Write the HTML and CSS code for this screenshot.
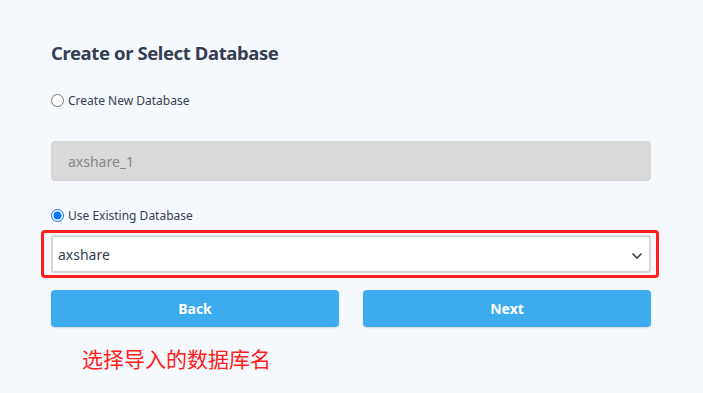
FILE: index.html
```html
<!DOCTYPE html>
<html lang="en">
<head>
  <meta charset="UTF-8" />
  <title>Create or Select Database</title>
  <meta name="viewport" content="width=device-width, initial-scale=1" />
  <link rel="stylesheet" href="styles.css">
</head>
<body>
  <div class="panel">
    <h1>Create or Select Database</h1>

    <label class="choice choice-first">
      <input type="radio" name="dbmode" value="new" />
      <span>Create New Database</span>
    </label>

    <input class="text-field" type="text" value="axshare_1" disabled />

    <label class="choice">
      <input type="radio" name="dbmode" value="existing" checked />
      <span>Use Existing Database</span>
    </label>

    <div class="highlight">
      <div class="select-box">
        <span>axshare</span>
        <svg class="chevron" width="12" height="8" viewBox="0 0 12 8">
          <path d="M1.5 1.5 L6 6 L10.5 1.5" fill="none" stroke="#3a4456" stroke-width="1.6" />
        </svg>
      </div>
    </div>

    <div class="actions">
      <button class="btn">Back</button>
      <button class="btn">Next</button>
    </div>

    <p class="note">选择导入的数据库名</p>
  </div>
</body>
</html>
```

FILE: styles.css
```css
body {
  font-family: 'Source Sans Pro', 'Noto Sans', sans-serif;
  background: #f5f8fc;
  margin: 0;
  color: #353e50;
}
.panel {
  width: 600px;
  padding: 41px 0 0 51px;
}
h1 {
  font-size: 18.5px;
  font-weight: bold;
  margin: 0;
  line-height: 24px;
  letter-spacing: -0.4px;
}
.choice {
  display: flex;
  align-items: center;
  gap: 4px;
  font-size: 12px;
  height: 20px;
}
.choice-first {
  margin-top: 25px;
}
.choice input {
  margin: 0;
  width: 13px;
  height: 13px;
}
.text-field {
  display: block;
  box-sizing: border-box;
  width: 600px;
  height: 40px;
  margin: 31px 0 24px;
  padding: 0 16px;
  border: 1px solid #d4d4d4;
  border-radius: 4px;
  background: #d9d9d9;
  color: #888;
  font-family: inherit;
  font-size: 14px;
}
.highlight {
  position: relative;
  margin-top: 10px;
}
.highlight::after {
  content: '';
  position: absolute;
  left: -10px;
  right: -8px;
  top: -5px;
  bottom: -5px;
  border: 3px solid #ff1f1f;
  border-radius: 4px;
}
.select-box {
  box-sizing: border-box;
  height: 38px;
  display: flex;
  align-items: center;
  justify-content: space-between;
  padding: 0 6px 0 5px;
  background: #fff;
  border: 2px solid #d6d6d6;
  border-radius: 3px;
  font-size: 14px;
  color: #353e50;
}
.chevron {
  margin-top: 3px;
}
.actions {
  display: flex;
  gap: 24px;
  margin-top: 17px;
}
.btn {
  flex: 1;
  height: 37px;
  border: none;
  border-radius: 4px;
  background: #3eabee;
  color: #fff;
  font-family: inherit;
  font-size: 14px;
  font-weight: bold;
  box-shadow: 0 1px 2px rgba(0,0,0,0.15);
}
.note {
  margin: 17px 0 0 31px;
  font-family: 'Noto Sans CJK SC', sans-serif;
  font-size: 21px;
  color: #ff2020;
  line-height: 28px;
}
```
